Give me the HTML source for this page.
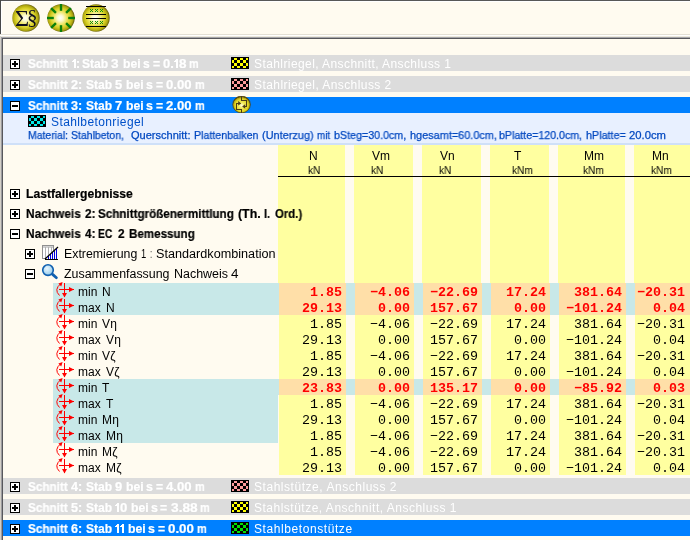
<!DOCTYPE html><html><head><meta charset="utf-8"><style>html,body{margin:0;padding:0}body{width:690px;height:540px;overflow:hidden;background:#fffbf0;position:relative;font-family:"Liberation Sans",sans-serif}div,span,svg{position:absolute;box-sizing:content-box}span{white-space:pre;will-change:transform}</style></head><body><div style="left:0px;top:0px;width:690px;height:1px;background:#585858;"></div><div style="left:0px;top:1px;width:690px;height:1px;background:#ffffff;"></div><div style="left:0px;top:0px;width:1px;height:34px;background:#484848;"></div><div style="left:1px;top:1px;width:1px;height:33px;background:#ffffff;"></div><div style="left:0px;top:34px;width:690px;height:1px;background:#e4e0d4;"></div><div style="left:0px;top:35px;width:690px;height:1px;background:#ffffff;"></div><div style="left:0px;top:36px;width:690px;height:1px;background:#ece8dc;"></div><div style="left:0px;top:36px;width:1px;height:504px;background:#d4d0c8;"></div><div style="left:1px;top:37px;width:689px;height:1px;background:#a4a4a8;"></div><div style="left:1px;top:37px;width:1px;height:503px;background:#9c9ca0;"></div><div style="left:2px;top:38px;width:688px;height:1px;background:#58585c;"></div><div style="left:2px;top:38px;width:1px;height:502px;background:#58585c;"></div><svg style="left:12px;top:4px" width="28" height="28" viewBox="0 0 28 28"><defs><radialGradient id="g26" cx="0.48" cy="0.5" r="0.52" fx="0.47" fy="0.5"><stop offset="0" stop-color="#ffffff"/><stop offset="0.2" stop-color="#fcfad0"/><stop offset="0.45" stop-color="#eee668"/><stop offset="0.7" stop-color="#d6ce22"/><stop offset="0.88" stop-color="#aca410"/><stop offset="1" stop-color="#5c5408"/></radialGradient></defs><circle cx="14" cy="14" r="13.7" fill="url(#g26)"/></svg><span style="top:2.43px;font-size:22.5px;line-height:33.75px;color:#101020;font-family:'Liberation Serif';left:15.40px;transform:scaleX(1.08);transform-origin:left center;">Σ</span><span style="top:1.56px;font-size:21px;line-height:31.5px;color:#101020;font-family:'Liberation Serif';left:26.70px;">§</span><svg style="left:47px;top:4px" width="28" height="28" viewBox="0 0 28 28"><defs><radialGradient id="g61" cx="0.48" cy="0.5" r="0.52" fx="0.47" fy="0.5"><stop offset="0" stop-color="#ffffff"/><stop offset="0.2" stop-color="#fcfad0"/><stop offset="0.45" stop-color="#eee668"/><stop offset="0.7" stop-color="#d6ce22"/><stop offset="0.88" stop-color="#aca410"/><stop offset="1" stop-color="#5c5408"/></radialGradient></defs><circle cx="14" cy="14" r="13.7" fill="url(#g61)"/><line x1="21.20" y1="14.00" x2="28.00" y2="14.00" stroke="#0c800c" stroke-width="2.4"/><line x1="19.09" y1="19.09" x2="23.90" y2="23.90" stroke="#0c800c" stroke-width="2.4"/><line x1="14.00" y1="21.20" x2="14.00" y2="28.00" stroke="#0c800c" stroke-width="2.4"/><line x1="8.91" y1="19.09" x2="4.10" y2="23.90" stroke="#0c800c" stroke-width="2.4"/><line x1="6.80" y1="14.00" x2="0.00" y2="14.00" stroke="#0c800c" stroke-width="2.4"/><line x1="8.91" y1="8.91" x2="4.10" y2="4.10" stroke="#0c800c" stroke-width="2.4"/><line x1="14.00" y1="6.80" x2="14.00" y2="0.00" stroke="#0c800c" stroke-width="2.4"/><line x1="19.09" y1="8.91" x2="23.90" y2="4.10" stroke="#0c800c" stroke-width="2.4"/></svg><svg style="left:82px;top:4px" width="28" height="28" viewBox="0 0 28 28"><defs><radialGradient id="g96" cx="0.48" cy="0.5" r="0.52" fx="0.47" fy="0.5"><stop offset="0" stop-color="#ffffff"/><stop offset="0.2" stop-color="#fcfad0"/><stop offset="0.45" stop-color="#eee668"/><stop offset="0.7" stop-color="#d6ce22"/><stop offset="0.88" stop-color="#aca410"/><stop offset="1" stop-color="#5c5408"/></radialGradient></defs><circle cx="14" cy="14" r="13.7" fill="url(#g96)"/><rect x="4" y="2" width="20" height="1" fill="#000" shape-rendering="crispEdges"/><rect x="4" y="10" width="20" height="1" fill="#000" shape-rendering="crispEdges"/><rect x="4" y="14" width="20" height="1" fill="#000" shape-rendering="crispEdges"/><rect x="4" y="22" width="20" height="1" fill="#000" shape-rendering="crispEdges"/><rect x="8" y="5" width="1" height="1" fill="#109010" shape-rendering="crispEdges"/><rect x="10" y="5" width="1" height="1" fill="#109010" shape-rendering="crispEdges"/><rect x="9" y="6" width="1" height="1" fill="#109010" shape-rendering="crispEdges"/><rect x="8" y="7" width="1" height="1" fill="#109010" shape-rendering="crispEdges"/><rect x="10" y="7" width="1" height="1" fill="#109010" shape-rendering="crispEdges"/><rect x="13" y="5" width="1" height="1" fill="#109010" shape-rendering="crispEdges"/><rect x="15" y="5" width="1" height="1" fill="#109010" shape-rendering="crispEdges"/><rect x="14" y="6" width="1" height="1" fill="#109010" shape-rendering="crispEdges"/><rect x="13" y="7" width="1" height="1" fill="#109010" shape-rendering="crispEdges"/><rect x="15" y="7" width="1" height="1" fill="#109010" shape-rendering="crispEdges"/><rect x="18" y="5" width="1" height="1" fill="#109010" shape-rendering="crispEdges"/><rect x="20" y="5" width="1" height="1" fill="#109010" shape-rendering="crispEdges"/><rect x="19" y="6" width="1" height="1" fill="#109010" shape-rendering="crispEdges"/><rect x="18" y="7" width="1" height="1" fill="#109010" shape-rendering="crispEdges"/><rect x="20" y="7" width="1" height="1" fill="#109010" shape-rendering="crispEdges"/><rect x="8" y="17" width="1" height="1" fill="#109010" shape-rendering="crispEdges"/><rect x="10" y="17" width="1" height="1" fill="#109010" shape-rendering="crispEdges"/><rect x="9" y="18" width="1" height="1" fill="#109010" shape-rendering="crispEdges"/><rect x="8" y="19" width="1" height="1" fill="#109010" shape-rendering="crispEdges"/><rect x="10" y="19" width="1" height="1" fill="#109010" shape-rendering="crispEdges"/><rect x="13" y="17" width="1" height="1" fill="#109010" shape-rendering="crispEdges"/><rect x="15" y="17" width="1" height="1" fill="#109010" shape-rendering="crispEdges"/><rect x="14" y="18" width="1" height="1" fill="#109010" shape-rendering="crispEdges"/><rect x="13" y="19" width="1" height="1" fill="#109010" shape-rendering="crispEdges"/><rect x="15" y="19" width="1" height="1" fill="#109010" shape-rendering="crispEdges"/><rect x="18" y="17" width="1" height="1" fill="#109010" shape-rendering="crispEdges"/><rect x="20" y="17" width="1" height="1" fill="#109010" shape-rendering="crispEdges"/><rect x="19" y="18" width="1" height="1" fill="#109010" shape-rendering="crispEdges"/><rect x="18" y="19" width="1" height="1" fill="#109010" shape-rendering="crispEdges"/><rect x="20" y="19" width="1" height="1" fill="#109010" shape-rendering="crispEdges"/></svg><div style="left:3px;top:55px;width:687px;height:16px;background:#dcdcdc;"></div><div style="left:10px;top:59px;width:8px;height:8px;border:1px solid #000;background:#fff"></div><div style="left:12px;top:63px;width:6px;height:2px;background:#000;"></div><div style="left:14px;top:61px;width:2px;height:6px;background:#000;"></div><span style="top:54.84px;font-size:12px;line-height:18.0px;color:#ffffff;font-weight:bold;-webkit-text-stroke:0.2px #ffffff;left:28.40px;transform:scaleX(0.976);transform-origin:left center;">Schnitt</span><span style="top:54.84px;font-size:12px;line-height:18.0px;color:#ffffff;font-weight:bold;-webkit-text-stroke:0.2px #ffffff;left:76.10px;transform:scaleX(0.9);transform-origin:left center;">:</span><span style="top:54.84px;font-size:12px;line-height:18.0px;color:#ffffff;font-weight:bold;-webkit-text-stroke:0.2px #ffffff;left:82.20px;transform:scaleX(1.007);transform-origin:left center;">Stab</span><span style="top:54.84px;font-size:12px;line-height:18.0px;color:#ffffff;font-weight:bold;-webkit-text-stroke:0.2px #ffffff;left:110.70px;transform:scaleX(1.136);transform-origin:left center;">3</span><span style="top:54.84px;font-size:12px;line-height:18.0px;color:#ffffff;font-weight:bold;-webkit-text-stroke:0.2px #ffffff;left:122.50px;transform:scaleX(1.009);transform-origin:left center;">bei</span><span style="top:54.84px;font-size:12px;line-height:18.0px;color:#ffffff;font-weight:bold;-webkit-text-stroke:0.2px #ffffff;left:142.70px;transform:scaleX(1.002);transform-origin:left center;">s</span><span style="top:54.84px;font-size:12px;line-height:18.0px;color:#ffffff;font-weight:bold;-webkit-text-stroke:0.2px #ffffff;left:152.50px;transform:scaleX(1.012);transform-origin:left center;">=</span><span style="top:54.84px;font-size:12px;line-height:18.0px;color:#ffffff;font-weight:bold;-webkit-text-stroke:0.2px #ffffff;left:162.50px;transform:scaleX(1.078);transform-origin:left center;">0.</span><span style="top:54.84px;font-size:12px;line-height:18.0px;color:#ffffff;font-weight:bold;-webkit-text-stroke:0.2px #ffffff;left:178.80px;transform:scaleX(1.121);transform-origin:left center;">8</span><span style="top:54.84px;font-size:12px;line-height:18.0px;color:#ffffff;font-weight:bold;-webkit-text-stroke:0.2px #ffffff;left:188.70px;transform:scaleX(0.909);transform-origin:left center;">m</span><svg style="left:231px;top:57px" width="18" height="12" shape-rendering="crispEdges"><rect width="18" height="12" fill="#000"/><rect x="3" y="1" width="3" height="2" fill="#ffff00"/><rect x="9" y="1" width="3" height="2" fill="#ffff00"/><rect x="15" y="1" width="2" height="2" fill="#ffff00"/><rect x="1" y="3" width="2" height="3" fill="#ffff00"/><rect x="6" y="3" width="3" height="3" fill="#ffff00"/><rect x="12" y="3" width="3" height="3" fill="#ffff00"/><rect x="3" y="6" width="3" height="3" fill="#ffff00"/><rect x="9" y="6" width="3" height="3" fill="#ffff00"/><rect x="15" y="6" width="2" height="3" fill="#ffff00"/><rect x="1" y="9" width="2" height="2" fill="#ffff00"/><rect x="6" y="9" width="3" height="2" fill="#ffff00"/><rect x="12" y="9" width="3" height="2" fill="#ffff00"/></svg><span style="top:54.84px;font-size:12px;line-height:18.0px;color:#ffffff;letter-spacing:0.415px;left:253.50px;">Stahlriegel, Anschnitt, Anschluss 1</span><div style="left:74px;top:59px;width:2px;height:9px;background:#fff;"></div><div style="left:73px;top:60px;width:1px;height:2px;background:#fff;"></div><div style="left:72px;top:61px;width:1px;height:1px;background:#fff;"></div><div style="left:176px;top:59px;width:2px;height:9px;background:#fff;"></div><div style="left:175px;top:60px;width:1px;height:2px;background:#fff;"></div><div style="left:174px;top:61px;width:1px;height:1px;background:#fff;"></div><div style="left:3px;top:76px;width:687px;height:16px;background:#dcdcdc;"></div><div style="left:10px;top:80px;width:8px;height:8px;border:1px solid #000;background:#fff"></div><div style="left:12px;top:84px;width:6px;height:2px;background:#000;"></div><div style="left:14px;top:82px;width:2px;height:6px;background:#000;"></div><span style="top:75.84px;font-size:12px;line-height:18.0px;color:#ffffff;font-weight:bold;-webkit-text-stroke:0.2px #ffffff;left:28.40px;transform:scaleX(0.976);transform-origin:left center;">Schnitt</span><span style="top:75.84px;font-size:12px;line-height:18.0px;color:#ffffff;font-weight:bold;-webkit-text-stroke:0.2px #ffffff;left:70.90px;transform:scaleX(1.049);transform-origin:left center;">2:</span><span style="top:75.84px;font-size:12px;line-height:18.0px;color:#ffffff;font-weight:bold;-webkit-text-stroke:0.2px #ffffff;left:85.70px;transform:scaleX(0.999);transform-origin:left center;">Stab</span><span style="top:75.84px;font-size:12px;line-height:18.0px;color:#ffffff;font-weight:bold;-webkit-text-stroke:0.2px #ffffff;left:114.70px;transform:scaleX(1.077);transform-origin:left center;">5</span><span style="top:75.84px;font-size:12px;line-height:18.0px;color:#ffffff;font-weight:bold;-webkit-text-stroke:0.2px #ffffff;left:125.70px;transform:scaleX(1.015);transform-origin:left center;">bei</span><span style="top:75.84px;font-size:12px;line-height:18.0px;color:#ffffff;font-weight:bold;-webkit-text-stroke:0.2px #ffffff;left:145.90px;transform:scaleX(1.032);transform-origin:left center;">s</span><span style="top:75.84px;font-size:12px;line-height:18.0px;color:#ffffff;font-weight:bold;-webkit-text-stroke:0.2px #ffffff;left:155.70px;transform:scaleX(1.012);transform-origin:left center;">=</span><span style="top:75.84px;font-size:12px;line-height:18.0px;color:#ffffff;font-weight:bold;-webkit-text-stroke:0.2px #ffffff;left:165.90px;transform:scaleX(1.096);transform-origin:left center;">0.00</span><span style="top:75.84px;font-size:12px;line-height:18.0px;color:#ffffff;font-weight:bold;-webkit-text-stroke:0.2px #ffffff;left:194.70px;transform:scaleX(0.918);transform-origin:left center;">m</span><svg style="left:231px;top:78px" width="18" height="12" shape-rendering="crispEdges"><rect width="18" height="12" fill="#000"/><rect x="3" y="1" width="3" height="2" fill="#ff9c9c"/><rect x="9" y="1" width="3" height="2" fill="#ff9c9c"/><rect x="15" y="1" width="2" height="2" fill="#ff9c9c"/><rect x="1" y="3" width="2" height="3" fill="#ff9c9c"/><rect x="6" y="3" width="3" height="3" fill="#ff9c9c"/><rect x="12" y="3" width="3" height="3" fill="#ff9c9c"/><rect x="3" y="6" width="3" height="3" fill="#ff9c9c"/><rect x="9" y="6" width="3" height="3" fill="#ff9c9c"/><rect x="15" y="6" width="2" height="3" fill="#ff9c9c"/><rect x="1" y="9" width="2" height="2" fill="#ff9c9c"/><rect x="6" y="9" width="3" height="2" fill="#ff9c9c"/><rect x="12" y="9" width="3" height="2" fill="#ff9c9c"/></svg><span style="top:75.84px;font-size:12px;line-height:18.0px;color:#ffffff;letter-spacing:0.425px;left:253.50px;">Stahlriegel, Anschluss 2</span><div style="left:3px;top:97px;width:687px;height:16px;background:#0080ff;"></div><div style="left:10px;top:101px;width:8px;height:8px;border:1px solid #000;background:#fff"></div><div style="left:12px;top:105px;width:6px;height:2px;background:#000;"></div><span style="top:96.84px;font-size:12px;line-height:18.0px;color:#ffffff;font-weight:bold;-webkit-text-stroke:0.2px #ffffff;left:28.40px;transform:scaleX(0.976);transform-origin:left center;">Schnitt</span><span style="top:96.84px;font-size:12px;line-height:18.0px;color:#ffffff;font-weight:bold;-webkit-text-stroke:0.2px #ffffff;left:70.90px;transform:scaleX(1.049);transform-origin:left center;">3:</span><span style="top:96.84px;font-size:12px;line-height:18.0px;color:#ffffff;font-weight:bold;-webkit-text-stroke:0.2px #ffffff;left:85.70px;transform:scaleX(0.999);transform-origin:left center;">Stab</span><span style="top:96.84px;font-size:12px;line-height:18.0px;color:#ffffff;font-weight:bold;-webkit-text-stroke:0.2px #ffffff;left:114.70px;transform:scaleX(1.077);transform-origin:left center;">7</span><span style="top:96.84px;font-size:12px;line-height:18.0px;color:#ffffff;font-weight:bold;-webkit-text-stroke:0.2px #ffffff;left:125.70px;transform:scaleX(1.015);transform-origin:left center;">bei</span><span style="top:96.84px;font-size:12px;line-height:18.0px;color:#ffffff;font-weight:bold;-webkit-text-stroke:0.2px #ffffff;left:145.90px;transform:scaleX(1.032);transform-origin:left center;">s</span><span style="top:96.84px;font-size:12px;line-height:18.0px;color:#ffffff;font-weight:bold;-webkit-text-stroke:0.2px #ffffff;left:155.70px;transform:scaleX(1.012);transform-origin:left center;">=</span><span style="top:96.84px;font-size:12px;line-height:18.0px;color:#ffffff;font-weight:bold;-webkit-text-stroke:0.2px #ffffff;left:165.90px;transform:scaleX(1.096);transform-origin:left center;">2.00</span><span style="top:96.84px;font-size:12px;line-height:18.0px;color:#ffffff;font-weight:bold;-webkit-text-stroke:0.2px #ffffff;left:194.70px;transform:scaleX(0.918);transform-origin:left center;">m</span><div style="left:3px;top:478px;width:687px;height:16px;background:#dcdcdc;"></div><div style="left:10px;top:482px;width:8px;height:8px;border:1px solid #000;background:#fff"></div><div style="left:12px;top:486px;width:6px;height:2px;background:#000;"></div><div style="left:14px;top:484px;width:2px;height:6px;background:#000;"></div><span style="top:477.84px;font-size:12px;line-height:18.0px;color:#ffffff;font-weight:bold;-webkit-text-stroke:0.2px #ffffff;left:28.40px;transform:scaleX(0.976);transform-origin:left center;">Schnitt</span><span style="top:477.84px;font-size:12px;line-height:18.0px;color:#ffffff;font-weight:bold;-webkit-text-stroke:0.2px #ffffff;left:70.90px;transform:scaleX(1.049);transform-origin:left center;">4:</span><span style="top:477.84px;font-size:12px;line-height:18.0px;color:#ffffff;font-weight:bold;-webkit-text-stroke:0.2px #ffffff;left:85.70px;transform:scaleX(0.999);transform-origin:left center;">Stab</span><span style="top:477.84px;font-size:12px;line-height:18.0px;color:#ffffff;font-weight:bold;-webkit-text-stroke:0.2px #ffffff;left:114.70px;transform:scaleX(1.077);transform-origin:left center;">9</span><span style="top:477.84px;font-size:12px;line-height:18.0px;color:#ffffff;font-weight:bold;-webkit-text-stroke:0.2px #ffffff;left:125.70px;transform:scaleX(1.015);transform-origin:left center;">bei</span><span style="top:477.84px;font-size:12px;line-height:18.0px;color:#ffffff;font-weight:bold;-webkit-text-stroke:0.2px #ffffff;left:145.90px;transform:scaleX(1.032);transform-origin:left center;">s</span><span style="top:477.84px;font-size:12px;line-height:18.0px;color:#ffffff;font-weight:bold;-webkit-text-stroke:0.2px #ffffff;left:155.70px;transform:scaleX(1.012);transform-origin:left center;">=</span><span style="top:477.84px;font-size:12px;line-height:18.0px;color:#ffffff;font-weight:bold;-webkit-text-stroke:0.2px #ffffff;left:165.90px;transform:scaleX(1.096);transform-origin:left center;">4.00</span><span style="top:477.84px;font-size:12px;line-height:18.0px;color:#ffffff;font-weight:bold;-webkit-text-stroke:0.2px #ffffff;left:194.70px;transform:scaleX(0.918);transform-origin:left center;">m</span><svg style="left:231px;top:480px" width="18" height="12" shape-rendering="crispEdges"><rect width="18" height="12" fill="#000"/><rect x="3" y="1" width="3" height="2" fill="#ff9c9c"/><rect x="9" y="1" width="3" height="2" fill="#ff9c9c"/><rect x="15" y="1" width="2" height="2" fill="#ff9c9c"/><rect x="1" y="3" width="2" height="3" fill="#ff9c9c"/><rect x="6" y="3" width="3" height="3" fill="#ff9c9c"/><rect x="12" y="3" width="3" height="3" fill="#ff9c9c"/><rect x="3" y="6" width="3" height="3" fill="#ff9c9c"/><rect x="9" y="6" width="3" height="3" fill="#ff9c9c"/><rect x="15" y="6" width="2" height="3" fill="#ff9c9c"/><rect x="1" y="9" width="2" height="2" fill="#ff9c9c"/><rect x="6" y="9" width="3" height="2" fill="#ff9c9c"/><rect x="12" y="9" width="3" height="2" fill="#ff9c9c"/></svg><span style="top:477.84px;font-size:12px;line-height:18.0px;color:#ffffff;letter-spacing:0.54px;left:253.50px;">Stahlstütze, Anschluss 2</span><div style="left:3px;top:499px;width:687px;height:16px;background:#dcdcdc;"></div><div style="left:10px;top:503px;width:8px;height:8px;border:1px solid #000;background:#fff"></div><div style="left:12px;top:507px;width:6px;height:2px;background:#000;"></div><div style="left:14px;top:505px;width:2px;height:6px;background:#000;"></div><span style="top:498.84px;font-size:12px;line-height:18.0px;color:#ffffff;font-weight:bold;-webkit-text-stroke:0.2px #ffffff;left:28.40px;transform:scaleX(0.976);transform-origin:left center;">Schnitt</span><span style="top:498.84px;font-size:12px;line-height:18.0px;color:#ffffff;font-weight:bold;-webkit-text-stroke:0.2px #ffffff;left:70.90px;transform:scaleX(1.049);transform-origin:left center;">5:</span><span style="top:498.84px;font-size:12px;line-height:18.0px;color:#ffffff;font-weight:bold;-webkit-text-stroke:0.2px #ffffff;left:85.70px;transform:scaleX(0.999);transform-origin:left center;">Stab</span><span style="top:498.84px;font-size:12px;line-height:18.0px;color:#ffffff;font-weight:bold;-webkit-text-stroke:0.2px #ffffff;left:120.10px;transform:scaleX(1.092);transform-origin:left center;">0</span><span style="top:498.84px;font-size:12px;line-height:18.0px;color:#ffffff;font-weight:bold;-webkit-text-stroke:0.2px #ffffff;left:130.70px;transform:scaleX(1.015);transform-origin:left center;">bei</span><span style="top:498.84px;font-size:12px;line-height:18.0px;color:#ffffff;font-weight:bold;-webkit-text-stroke:0.2px #ffffff;left:151.00px;transform:scaleX(1.032);transform-origin:left center;">s</span><span style="top:498.84px;font-size:12px;line-height:18.0px;color:#ffffff;font-weight:bold;-webkit-text-stroke:0.2px #ffffff;left:160.40px;transform:scaleX(1.012);transform-origin:left center;">=</span><span style="top:498.84px;font-size:12px;line-height:18.0px;color:#ffffff;font-weight:bold;-webkit-text-stroke:0.2px #ffffff;left:170.60px;transform:scaleX(1.143);transform-origin:left center;">3.88</span><span style="top:498.84px;font-size:12px;line-height:18.0px;color:#ffffff;font-weight:bold;-webkit-text-stroke:0.2px #ffffff;left:200.30px;transform:scaleX(0.918);transform-origin:left center;">m</span><svg style="left:231px;top:501px" width="18" height="12" shape-rendering="crispEdges"><rect width="18" height="12" fill="#000"/><rect x="3" y="1" width="3" height="2" fill="#ffff00"/><rect x="9" y="1" width="3" height="2" fill="#ffff00"/><rect x="15" y="1" width="2" height="2" fill="#ffff00"/><rect x="1" y="3" width="2" height="3" fill="#ffff00"/><rect x="6" y="3" width="3" height="3" fill="#ffff00"/><rect x="12" y="3" width="3" height="3" fill="#ffff00"/><rect x="3" y="6" width="3" height="3" fill="#ffff00"/><rect x="9" y="6" width="3" height="3" fill="#ffff00"/><rect x="15" y="6" width="2" height="3" fill="#ffff00"/><rect x="1" y="9" width="2" height="2" fill="#ffff00"/><rect x="6" y="9" width="3" height="2" fill="#ffff00"/><rect x="12" y="9" width="3" height="2" fill="#ffff00"/></svg><span style="top:498.84px;font-size:12px;line-height:18.0px;color:#ffffff;letter-spacing:0.5px;left:253.50px;">Stahlstütze, Anschnitt, Anschluss 1</span><div style="left:3px;top:520px;width:687px;height:16px;background:#0080ff;"></div><div style="left:10px;top:524px;width:8px;height:8px;border:1px solid #000;background:#fff"></div><div style="left:12px;top:528px;width:6px;height:2px;background:#000;"></div><div style="left:14px;top:526px;width:2px;height:6px;background:#000;"></div><span style="top:519.84px;font-size:12px;line-height:18.0px;color:#ffffff;font-weight:bold;-webkit-text-stroke:0.2px #ffffff;left:28.40px;transform:scaleX(0.976);transform-origin:left center;">Schnitt</span><span style="top:519.84px;font-size:12px;line-height:18.0px;color:#ffffff;font-weight:bold;-webkit-text-stroke:0.2px #ffffff;left:70.90px;transform:scaleX(1.049);transform-origin:left center;">6:</span><span style="top:519.84px;font-size:12px;line-height:18.0px;color:#ffffff;font-weight:bold;-webkit-text-stroke:0.2px #ffffff;left:85.70px;transform:scaleX(0.999);transform-origin:left center;">Stab</span><span style="top:519.84px;font-size:12px;line-height:18.0px;color:#ffffff;font-weight:bold;-webkit-text-stroke:0.2px #ffffff;left:127.80px;transform:scaleX(1.021);transform-origin:left center;">bei</span><span style="top:519.84px;font-size:12px;line-height:18.0px;color:#ffffff;font-weight:bold;-webkit-text-stroke:0.2px #ffffff;left:148.10px;transform:scaleX(1.032);transform-origin:left center;">s</span><span style="top:519.84px;font-size:12px;line-height:18.0px;color:#ffffff;font-weight:bold;-webkit-text-stroke:0.2px #ffffff;left:157.80px;transform:scaleX(1.012);transform-origin:left center;">=</span><span style="top:519.84px;font-size:12px;line-height:18.0px;color:#ffffff;font-weight:bold;-webkit-text-stroke:0.2px #ffffff;left:167.70px;transform:scaleX(1.109);transform-origin:left center;">0.00</span><span style="top:519.84px;font-size:12px;line-height:18.0px;color:#ffffff;font-weight:bold;-webkit-text-stroke:0.2px #ffffff;left:196.70px;transform:scaleX(0.918);transform-origin:left center;">m</span><svg style="left:231px;top:522px" width="18" height="12" shape-rendering="crispEdges"><rect width="18" height="12" fill="#000"/><rect x="3" y="1" width="3" height="2" fill="#00e000"/><rect x="9" y="1" width="3" height="2" fill="#00e000"/><rect x="15" y="1" width="2" height="2" fill="#00e000"/><rect x="1" y="3" width="2" height="3" fill="#00e000"/><rect x="6" y="3" width="3" height="3" fill="#00e000"/><rect x="12" y="3" width="3" height="3" fill="#00e000"/><rect x="3" y="6" width="3" height="3" fill="#00e000"/><rect x="9" y="6" width="3" height="3" fill="#00e000"/><rect x="15" y="6" width="2" height="3" fill="#00e000"/><rect x="1" y="9" width="2" height="2" fill="#00e000"/><rect x="6" y="9" width="3" height="2" fill="#00e000"/><rect x="12" y="9" width="3" height="2" fill="#00e000"/></svg><span style="top:519.84px;font-size:12px;line-height:18.0px;color:#ffffff;letter-spacing:0.58px;left:253.50px;">Stahlbetonstütze</span><div style="left:117px;top:503px;width:2px;height:9px;background:#fff;"></div><div style="left:116px;top:504px;width:1px;height:2px;background:#fff;"></div><div style="left:115px;top:505px;width:1px;height:1px;background:#fff;"></div><div style="left:117px;top:524px;width:2px;height:9px;background:#fff;"></div><div style="left:116px;top:525px;width:1px;height:2px;background:#fff;"></div><div style="left:115px;top:526px;width:1px;height:1px;background:#fff;"></div><div style="left:122px;top:524px;width:2px;height:9px;background:#fff;"></div><div style="left:121px;top:525px;width:1px;height:2px;background:#fff;"></div><div style="left:120px;top:526px;width:1px;height:1px;background:#fff;"></div><svg style="left:232px;top:96px" width="19" height="17" viewBox="0 0 19 17"><defs><radialGradient id="gs" cx="0.5" cy="0.55" r="0.5"><stop offset="0" stop-color="#fffce0"/><stop offset="0.3" stop-color="#f4ec60"/><stop offset="0.75" stop-color="#e0d420"/><stop offset="0.93" stop-color="#b0a010"/><stop offset="1" stop-color="#605008"/></radialGradient></defs><ellipse cx="9.55" cy="8.5" rx="8.8" ry="8.4" fill="url(#gs)" stroke="#504010" stroke-width="0.7"/><g fill="#4c3c18" shape-rendering="crispEdges"><rect x="9" y="0" width="1" height="5"/><rect x="9" y="4" width="6" height="1"/><rect x="14" y="4" width="1" height="7"/><rect x="12" y="10" width="3" height="1"/><rect x="9" y="13" width="1" height="4"/><rect x="4" y="13" width="6" height="1"/><rect x="4" y="7" width="1" height="7"/><rect x="4" y="7" width="3" height="1"/></g><path d="M6.2 5L6.2 9.6L9.2 7.4Z M13.2 8.2L13.2 12.8L10.2 10.5Z" fill="#4c3c18"/></svg><div style="left:3px;top:113px;width:687px;height:31px;background:#e8f0ff;"></div><div style="left:3px;top:143px;width:687px;height:2px;background:#cfe0f8;"></div><svg style="left:28px;top:115px" width="18" height="12" shape-rendering="crispEdges"><rect width="18" height="12" fill="#000"/><rect x="3" y="1" width="3" height="2" fill="#00e8e8"/><rect x="9" y="1" width="3" height="2" fill="#00e8e8"/><rect x="15" y="1" width="2" height="2" fill="#00e8e8"/><rect x="1" y="3" width="2" height="3" fill="#00e8e8"/><rect x="6" y="3" width="3" height="3" fill="#00e8e8"/><rect x="12" y="3" width="3" height="3" fill="#00e8e8"/><rect x="3" y="6" width="3" height="3" fill="#00e8e8"/><rect x="9" y="6" width="3" height="3" fill="#00e8e8"/><rect x="15" y="6" width="2" height="3" fill="#00e8e8"/><rect x="1" y="9" width="2" height="2" fill="#00e8e8"/><rect x="6" y="9" width="3" height="2" fill="#00e8e8"/><rect x="12" y="9" width="3" height="2" fill="#00e8e8"/></svg><span style="top:112.84px;font-size:12px;line-height:18.0px;color:#0050c8;letter-spacing:0.398px;left:51.00px;">Stahlbetonriegel</span><span style="top:126.94px;font-size:11px;line-height:16.5px;color:#0048c0;-webkit-text-stroke:0.25px #0048c0;left:27.70px;transform:scaleX(0.951);transform-origin:left center;">Material:</span><span style="top:126.94px;font-size:11px;line-height:16.5px;color:#0048c0;-webkit-text-stroke:0.25px #0048c0;left:71.00px;transform:scaleX(0.952);transform-origin:left center;">Stahlbeton,</span><span style="top:126.94px;font-size:11px;line-height:16.5px;color:#0048c0;-webkit-text-stroke:0.25px #0048c0;left:130.50px;transform:scaleX(1.003);transform-origin:left center;">Querschnitt:</span><span style="top:126.94px;font-size:11px;line-height:16.5px;color:#0048c0;-webkit-text-stroke:0.25px #0048c0;left:193.90px;transform:scaleX(0.966);transform-origin:left center;">Plattenbalken</span><span style="top:126.94px;font-size:11px;line-height:16.5px;color:#0048c0;-webkit-text-stroke:0.25px #0048c0;left:261.70px;transform:scaleX(0.993);transform-origin:left center;">(Unterzug)</span><span style="top:126.94px;font-size:11px;line-height:16.5px;color:#0048c0;-webkit-text-stroke:0.25px #0048c0;left:316.90px;transform:scaleX(0.893);transform-origin:left center;">mit</span><span style="top:126.94px;font-size:11px;line-height:16.5px;color:#0048c0;-webkit-text-stroke:0.25px #0048c0;left:333.90px;transform:scaleX(0.972);transform-origin:left center;">bSteg=30.0cm,</span><span style="top:126.94px;font-size:11px;line-height:16.5px;color:#0048c0;-webkit-text-stroke:0.25px #0048c0;left:410.00px;transform:scaleX(0.991);transform-origin:left center;">hgesamt=60.0cm,</span><span style="top:126.94px;font-size:11px;line-height:16.5px;color:#0048c0;-webkit-text-stroke:0.25px #0048c0;left:499.40px;transform:scaleX(0.967);transform-origin:left center;">bPlatte=120.0cm,</span><span style="top:126.94px;font-size:11px;line-height:16.5px;color:#0048c0;-webkit-text-stroke:0.25px #0048c0;left:585.50px;transform:scaleX(0.979);transform-origin:left center;">hPlatte=</span><span style="top:126.94px;font-size:11px;line-height:16.5px;color:#0048c0;-webkit-text-stroke:0.25px #0048c0;left:628.90px;transform:scaleX(1.023);transform-origin:left center;">20.0cm</span><div style="left:278px;top:145px;width:67px;height:138px;background:#ffffa0;"></div><div style="left:354px;top:145px;width:59px;height:138px;background:#ffffa0;"></div><div style="left:422px;top:145px;width:59px;height:138px;background:#ffffa0;"></div><div style="left:490px;top:145px;width:59px;height:138px;background:#ffffa0;"></div><div style="left:558px;top:145px;width:67px;height:138px;background:#ffffa0;"></div><div style="left:634px;top:145px;width:56px;height:138px;background:#ffffa0;"></div><div style="left:279px;top:283px;width:67px;height:192px;background:#ffffa0;"></div><div style="left:355px;top:283px;width:59px;height:192px;background:#ffffa0;"></div><div style="left:423px;top:283px;width:59px;height:192px;background:#ffffa0;"></div><div style="left:491px;top:283px;width:59px;height:192px;background:#ffffa0;"></div><div style="left:559px;top:283px;width:67px;height:192px;background:#ffffa0;"></div><div style="left:635px;top:283px;width:55px;height:192px;background:#ffffa0;"></div><div style="left:53px;top:283px;width:637px;height:32px;background:#c8e8e8;"></div><div style="left:279px;top:283px;width:67px;height:32px;background:#ffdfa8;"></div><div style="left:355px;top:283px;width:59px;height:32px;background:#ffdfa8;"></div><div style="left:423px;top:283px;width:59px;height:32px;background:#ffdfa8;"></div><div style="left:491px;top:283px;width:59px;height:32px;background:#ffdfa8;"></div><div style="left:559px;top:283px;width:67px;height:32px;background:#ffdfa8;"></div><div style="left:635px;top:283px;width:55px;height:32px;background:#ffdfa8;"></div><div style="left:53px;top:379px;width:637px;height:16px;background:#c8e8e8;"></div><div style="left:279px;top:379px;width:67px;height:16px;background:#ffdfa8;"></div><div style="left:355px;top:379px;width:59px;height:16px;background:#ffdfa8;"></div><div style="left:423px;top:379px;width:59px;height:16px;background:#ffdfa8;"></div><div style="left:491px;top:379px;width:59px;height:16px;background:#ffdfa8;"></div><div style="left:559px;top:379px;width:67px;height:16px;background:#ffdfa8;"></div><div style="left:635px;top:379px;width:55px;height:16px;background:#ffdfa8;"></div><div style="left:53px;top:395px;width:225px;height:48px;background:#c8e8e8;"></div><div style="left:278px;top:176px;width:412px;height:1px;background:#000;"></div><span style="top:146.84px;font-size:12px;line-height:18.0px;color:#000;left:309.20px;">N</span><span style="top:161.94px;font-size:11px;line-height:16.5px;color:#000;left:308.00px;transform:scaleX(0.92);transform-origin:left center;">kN</span><span style="top:146.84px;font-size:12px;line-height:18.0px;color:#000;left:372.40px;">Vm</span><span style="top:161.94px;font-size:11px;line-height:16.5px;color:#000;left:371.30px;transform:scaleX(0.92);transform-origin:left center;">kN</span><span style="top:146.84px;font-size:12px;line-height:18.0px;color:#000;left:440.40px;">Vn</span><span style="top:161.94px;font-size:11px;line-height:16.5px;color:#000;left:439.30px;transform:scaleX(0.92);transform-origin:left center;">kN</span><span style="top:146.84px;font-size:12px;line-height:18.0px;color:#000;left:514.00px;">T</span><span style="top:161.94px;font-size:11px;line-height:16.5px;color:#000;left:512.30px;transform:scaleX(0.92);transform-origin:left center;">kNm</span><span style="top:146.84px;font-size:12px;line-height:18.0px;color:#000;left:584.30px;">Mm</span><span style="top:161.94px;font-size:11px;line-height:16.5px;color:#000;left:582.80px;transform:scaleX(0.92);transform-origin:left center;">kNm</span><span style="top:146.84px;font-size:12px;line-height:18.0px;color:#000;left:652.30px;">Mn</span><span style="top:161.94px;font-size:11px;line-height:16.5px;color:#000;left:650.70px;transform:scaleX(0.92);transform-origin:left center;">kNm</span><div style="left:10px;top:189px;width:8px;height:8px;border:1px solid #000;background:#fff"></div><div style="left:12px;top:193px;width:6px;height:2px;background:#000;"></div><div style="left:14px;top:191px;width:2px;height:6px;background:#000;"></div><span style="top:184.84px;font-size:12px;line-height:18.0px;color:#000;font-weight:bold;-webkit-text-stroke:0.2px #000;left:26.40px;transform:scaleX(1.014);transform-origin:left center;">Lastfallergebnisse</span><div style="left:10px;top:209px;width:8px;height:8px;border:1px solid #000;background:#fff"></div><div style="left:12px;top:213px;width:6px;height:2px;background:#000;"></div><div style="left:14px;top:211px;width:2px;height:6px;background:#000;"></div><span style="top:204.84px;font-size:12px;line-height:18.0px;color:#000;font-weight:bold;-webkit-text-stroke:0.2px #000;left:26.40px;transform:scaleX(0.99);transform-origin:left center;">Nachweis</span><span style="top:204.84px;font-size:12px;line-height:18.0px;color:#000;font-weight:bold;-webkit-text-stroke:0.2px #000;left:84.90px;transform:scaleX(0.975);transform-origin:left center;">2:</span><span style="top:204.84px;font-size:12px;line-height:18.0px;color:#000;font-weight:bold;-webkit-text-stroke:0.2px #000;left:98.40px;transform:scaleX(0.97);transform-origin:left center;">Schnittgrößenermittlung</span><span style="top:204.84px;font-size:12px;line-height:18.0px;color:#000;font-weight:bold;-webkit-text-stroke:0.2px #000;left:238.00px;transform:scaleX(1.032);transform-origin:left center;">(Th.</span><span style="top:204.84px;font-size:12px;line-height:18.0px;color:#000;font-weight:bold;-webkit-text-stroke:0.2px #000;left:264.00px;transform:scaleX(0.914);transform-origin:left center;">I.</span><span style="top:204.84px;font-size:12px;line-height:18.0px;color:#000;font-weight:bold;-webkit-text-stroke:0.2px #000;left:274.50px;transform:scaleX(0.945);transform-origin:left center;">Ord.)</span><div style="left:10px;top:229px;width:8px;height:8px;border:1px solid #000;background:#fff"></div><div style="left:12px;top:233px;width:6px;height:2px;background:#000;"></div><span style="top:224.84px;font-size:12px;line-height:18.0px;color:#000;font-weight:bold;-webkit-text-stroke:0.2px #000;left:26.40px;transform:scaleX(0.99);transform-origin:left center;">Nachweis</span><span style="top:224.84px;font-size:12px;line-height:18.0px;color:#000;font-weight:bold;-webkit-text-stroke:0.2px #000;left:84.90px;transform:scaleX(0.975);transform-origin:left center;">4:</span><span style="top:224.84px;font-size:12px;line-height:18.0px;color:#000;font-weight:bold;-webkit-text-stroke:0.2px #000;left:98.40px;transform:scaleX(0.858);transform-origin:left center;">EC</span><span style="top:224.84px;font-size:12px;line-height:18.0px;color:#000;font-weight:bold;-webkit-text-stroke:0.2px #000;left:118.00px;transform:scaleX(0.987);transform-origin:left center;">2</span><span style="top:224.84px;font-size:12px;line-height:18.0px;color:#000;font-weight:bold;-webkit-text-stroke:0.2px #000;left:128.80px;transform:scaleX(0.967);transform-origin:left center;">Bemessung</span><div style="left:25px;top:249px;width:8px;height:8px;border:1px solid #000;background:#fff"></div><div style="left:27px;top:253px;width:6px;height:2px;background:#000;"></div><div style="left:29px;top:251px;width:2px;height:6px;background:#000;"></div><span style="top:244.84px;font-size:12px;line-height:18.0px;color:#000;left:63.50px;transform:scaleX(1.027);transform-origin:left center;">Extremierung</span><span style="top:244.84px;font-size:12px;line-height:18.0px;color:#000;left:140.90px;transform:scaleX(0.778);transform-origin:left center;">1</span><span style="top:244.84px;font-size:12px;line-height:18.0px;color:#000;left:149.50px;transform:scaleX(0.658);transform-origin:left center;">:</span><span style="top:244.84px;font-size:12px;line-height:18.0px;color:#000;left:155.70px;transform:scaleX(1.054);transform-origin:left center;">Standardkombination</span><div style="left:25px;top:269px;width:8px;height:8px;border:1px solid #000;background:#fff"></div><div style="left:27px;top:273px;width:6px;height:2px;background:#000;"></div><span style="top:264.84px;font-size:12px;line-height:18.0px;color:#000;left:63.50px;transform:scaleX(1.034);transform-origin:left center;">Zusammenfassung</span><span style="top:264.84px;font-size:12px;line-height:18.0px;color:#000;left:173.70px;transform:scaleX(1.038);transform-origin:left center;">Nachweis</span><span style="top:264.84px;font-size:12px;line-height:18.0px;color:#000;left:231.30px;transform:scaleX(1.121);transform-origin:left center;">4</span><svg style="left:42px;top:245px" width="17" height="15" viewBox="0 0 17 15" shape-rendering="crispEdges"><rect x="0.5" y="0.5" width="11" height="13" fill="#fff" stroke="#909090"/><rect x="1" y="1" width="10" height="2" fill="#d0d0d0"/><rect x="3" y="2" width="1" height="11" fill="#b0b0b0"/><rect x="6" y="2" width="1" height="11" fill="#b0b0b0"/><rect x="9" y="2" width="1" height="11" fill="#b0b0b0"/><path d="M3 14.5L16 2.5V14.5Z" fill="#fffbf0" shape-rendering="auto"/><rect x="6" y="11" width="1" height="3" fill="#0000e0"/><rect x="8" y="9" width="1" height="5" fill="#0000e0"/><rect x="10" y="7" width="1" height="7" fill="#0000e0"/><rect x="12" y="5" width="1" height="9" fill="#0000e0"/><rect x="14" y="3" width="1" height="11" fill="#0000e0"/><path d="M3 14L16 2" stroke="#000" stroke-width="1.2" fill="none" shape-rendering="auto"/><rect x="3" y="14" width="13" height="1" fill="#000"/></svg><svg style="left:41px;top:264px" width="18" height="17" viewBox="0 0 18 17"><defs><radialGradient id="gm" cx="0.4" cy="0.35" r="0.7"><stop offset="0" stop-color="#e8f6ff"/><stop offset="1" stop-color="#90c8e8"/></radialGradient></defs><line x1="11.6" y1="10.4" x2="15.4" y2="13.7" stroke="#1060b0" stroke-width="2.8" stroke-linecap="round"/><circle cx="7" cy="6.1" r="5.3" fill="url(#gm)" stroke="#1060b0" stroke-width="1.6"/></svg><svg style="left:55px;top:282px" width="20" height="16" viewBox="0 0 20 16"><g fill="#ff0000" shape-rendering="crispEdges"><rect x="9" y="1" width="1" height="14"/><rect x="4" y="7" width="15" height="1"/></g><path d="M14 5L19 7.5L14 10Z M7 11L12 11L9.5 15.5Z" fill="#ff0000"/><path d="M6 1.5Q-1.6 7.5 4.5 13.5" fill="none" stroke="#ff0000" stroke-width="1"/><path d="M7.6 0L3.4 1.4L6.2 4.4Z" fill="#ff0000"/></svg><span style="top:283.14px;font-size:12px;line-height:18.0px;color:#000;left:78.00px;">min</span><span style="top:283.14px;font-size:12px;line-height:18.0px;color:#000;letter-spacing:0.3px;left:101.90px;">N</span><span style="top:282.95px;font-size:13.33px;line-height:19.995px;color:#ff0000;font-family:'Liberation Mono';font-weight:bold;right:348.50px;">1.85</span><span style="top:282.95px;font-size:13.33px;line-height:19.995px;color:#ff0000;font-family:'Liberation Mono';font-weight:bold;right:280.50px;">−4.06</span><span style="top:282.95px;font-size:13.33px;line-height:19.995px;color:#ff0000;font-family:'Liberation Mono';font-weight:bold;right:212.50px;">−22.69</span><span style="top:282.95px;font-size:13.33px;line-height:19.995px;color:#ff0000;font-family:'Liberation Mono';font-weight:bold;right:144.50px;">17.24</span><span style="top:282.95px;font-size:13.33px;line-height:19.995px;color:#ff0000;font-family:'Liberation Mono';font-weight:bold;right:68.50px;">381.64</span><span style="top:282.95px;font-size:13.33px;line-height:19.995px;color:#ff0000;font-family:'Liberation Mono';font-weight:bold;right:5.00px;">−20.31</span><svg style="left:55px;top:298px" width="20" height="16" viewBox="0 0 20 16"><g fill="#ff0000" shape-rendering="crispEdges"><rect x="9" y="1" width="1" height="14"/><rect x="4" y="7" width="15" height="1"/></g><path d="M14 5L19 7.5L14 10Z M7 11L12 11L9.5 15.5Z" fill="#ff0000"/><path d="M6 1.5Q-1.6 7.5 4.5 13.5" fill="none" stroke="#ff0000" stroke-width="1"/><path d="M7.6 0L3.4 1.4L6.2 4.4Z" fill="#ff0000"/></svg><span style="top:299.14px;font-size:12px;line-height:18.0px;color:#000;left:78.00px;">max</span><span style="top:299.14px;font-size:12px;line-height:18.0px;color:#000;letter-spacing:0.3px;left:105.50px;">N</span><span style="top:298.95px;font-size:13.33px;line-height:19.995px;color:#ff0000;font-family:'Liberation Mono';font-weight:bold;right:348.50px;">29.13</span><span style="top:298.95px;font-size:13.33px;line-height:19.995px;color:#ff0000;font-family:'Liberation Mono';font-weight:bold;right:280.50px;">0.00</span><span style="top:298.95px;font-size:13.33px;line-height:19.995px;color:#ff0000;font-family:'Liberation Mono';font-weight:bold;right:212.50px;">157.67</span><span style="top:298.95px;font-size:13.33px;line-height:19.995px;color:#ff0000;font-family:'Liberation Mono';font-weight:bold;right:144.50px;">0.00</span><span style="top:298.95px;font-size:13.33px;line-height:19.995px;color:#ff0000;font-family:'Liberation Mono';font-weight:bold;right:68.50px;">−101.24</span><span style="top:298.95px;font-size:13.33px;line-height:19.995px;color:#ff0000;font-family:'Liberation Mono';font-weight:bold;right:5.00px;">0.04</span><svg style="left:55px;top:314px" width="20" height="16" viewBox="0 0 20 16"><g fill="#ff0000" shape-rendering="crispEdges"><rect x="9" y="1" width="1" height="14"/><rect x="4" y="7" width="15" height="1"/></g><path d="M14 5L19 7.5L14 10Z M7 11L12 11L9.5 15.5Z" fill="#ff0000"/><path d="M6 1.5Q-1.6 7.5 4.5 13.5" fill="none" stroke="#ff0000" stroke-width="1"/><path d="M7.6 0L3.4 1.4L6.2 4.4Z" fill="#ff0000"/></svg><span style="top:315.14px;font-size:12px;line-height:18.0px;color:#000;left:78.00px;">min</span><span style="top:315.14px;font-size:12px;line-height:18.0px;color:#000;letter-spacing:0.3px;left:101.90px;">Vη</span><span style="top:314.95px;font-size:13.33px;line-height:19.995px;color:#000;font-family:'Liberation Mono';right:348.50px;">1.85</span><span style="top:314.95px;font-size:13.33px;line-height:19.995px;color:#000;font-family:'Liberation Mono';right:280.50px;">−4.06</span><span style="top:314.95px;font-size:13.33px;line-height:19.995px;color:#000;font-family:'Liberation Mono';right:212.50px;">−22.69</span><span style="top:314.95px;font-size:13.33px;line-height:19.995px;color:#000;font-family:'Liberation Mono';right:144.50px;">17.24</span><span style="top:314.95px;font-size:13.33px;line-height:19.995px;color:#000;font-family:'Liberation Mono';right:68.50px;">381.64</span><span style="top:314.95px;font-size:13.33px;line-height:19.995px;color:#000;font-family:'Liberation Mono';right:5.00px;">−20.31</span><svg style="left:55px;top:330px" width="20" height="16" viewBox="0 0 20 16"><g fill="#ff0000" shape-rendering="crispEdges"><rect x="9" y="1" width="1" height="14"/><rect x="4" y="7" width="15" height="1"/></g><path d="M14 5L19 7.5L14 10Z M7 11L12 11L9.5 15.5Z" fill="#ff0000"/><path d="M6 1.5Q-1.6 7.5 4.5 13.5" fill="none" stroke="#ff0000" stroke-width="1"/><path d="M7.6 0L3.4 1.4L6.2 4.4Z" fill="#ff0000"/></svg><span style="top:331.14px;font-size:12px;line-height:18.0px;color:#000;left:78.00px;">max</span><span style="top:331.14px;font-size:12px;line-height:18.0px;color:#000;letter-spacing:0.3px;left:105.50px;">Vη</span><span style="top:330.95px;font-size:13.33px;line-height:19.995px;color:#000;font-family:'Liberation Mono';right:348.50px;">29.13</span><span style="top:330.95px;font-size:13.33px;line-height:19.995px;color:#000;font-family:'Liberation Mono';right:280.50px;">0.00</span><span style="top:330.95px;font-size:13.33px;line-height:19.995px;color:#000;font-family:'Liberation Mono';right:212.50px;">157.67</span><span style="top:330.95px;font-size:13.33px;line-height:19.995px;color:#000;font-family:'Liberation Mono';right:144.50px;">0.00</span><span style="top:330.95px;font-size:13.33px;line-height:19.995px;color:#000;font-family:'Liberation Mono';right:68.50px;">−101.24</span><span style="top:330.95px;font-size:13.33px;line-height:19.995px;color:#000;font-family:'Liberation Mono';right:5.00px;">0.04</span><svg style="left:55px;top:346px" width="20" height="16" viewBox="0 0 20 16"><g fill="#ff0000" shape-rendering="crispEdges"><rect x="9" y="1" width="1" height="14"/><rect x="4" y="7" width="15" height="1"/></g><path d="M14 5L19 7.5L14 10Z M7 11L12 11L9.5 15.5Z" fill="#ff0000"/><path d="M6 1.5Q-1.6 7.5 4.5 13.5" fill="none" stroke="#ff0000" stroke-width="1"/><path d="M7.6 0L3.4 1.4L6.2 4.4Z" fill="#ff0000"/></svg><span style="top:347.14px;font-size:12px;line-height:18.0px;color:#000;left:78.00px;">min</span><span style="top:347.14px;font-size:12px;line-height:18.0px;color:#000;letter-spacing:0.3px;left:101.90px;">Vζ</span><span style="top:346.95px;font-size:13.33px;line-height:19.995px;color:#000;font-family:'Liberation Mono';right:348.50px;">1.85</span><span style="top:346.95px;font-size:13.33px;line-height:19.995px;color:#000;font-family:'Liberation Mono';right:280.50px;">−4.06</span><span style="top:346.95px;font-size:13.33px;line-height:19.995px;color:#000;font-family:'Liberation Mono';right:212.50px;">−22.69</span><span style="top:346.95px;font-size:13.33px;line-height:19.995px;color:#000;font-family:'Liberation Mono';right:144.50px;">17.24</span><span style="top:346.95px;font-size:13.33px;line-height:19.995px;color:#000;font-family:'Liberation Mono';right:68.50px;">381.64</span><span style="top:346.95px;font-size:13.33px;line-height:19.995px;color:#000;font-family:'Liberation Mono';right:5.00px;">−20.31</span><svg style="left:55px;top:362px" width="20" height="16" viewBox="0 0 20 16"><g fill="#ff0000" shape-rendering="crispEdges"><rect x="9" y="1" width="1" height="14"/><rect x="4" y="7" width="15" height="1"/></g><path d="M14 5L19 7.5L14 10Z M7 11L12 11L9.5 15.5Z" fill="#ff0000"/><path d="M6 1.5Q-1.6 7.5 4.5 13.5" fill="none" stroke="#ff0000" stroke-width="1"/><path d="M7.6 0L3.4 1.4L6.2 4.4Z" fill="#ff0000"/></svg><span style="top:363.14px;font-size:12px;line-height:18.0px;color:#000;left:78.00px;">max</span><span style="top:363.14px;font-size:12px;line-height:18.0px;color:#000;letter-spacing:0.3px;left:105.50px;">Vζ</span><span style="top:362.95px;font-size:13.33px;line-height:19.995px;color:#000;font-family:'Liberation Mono';right:348.50px;">29.13</span><span style="top:362.95px;font-size:13.33px;line-height:19.995px;color:#000;font-family:'Liberation Mono';right:280.50px;">0.00</span><span style="top:362.95px;font-size:13.33px;line-height:19.995px;color:#000;font-family:'Liberation Mono';right:212.50px;">157.67</span><span style="top:362.95px;font-size:13.33px;line-height:19.995px;color:#000;font-family:'Liberation Mono';right:144.50px;">0.00</span><span style="top:362.95px;font-size:13.33px;line-height:19.995px;color:#000;font-family:'Liberation Mono';right:68.50px;">−101.24</span><span style="top:362.95px;font-size:13.33px;line-height:19.995px;color:#000;font-family:'Liberation Mono';right:5.00px;">0.04</span><svg style="left:55px;top:378px" width="20" height="16" viewBox="0 0 20 16"><g fill="#ff0000" shape-rendering="crispEdges"><rect x="9" y="1" width="1" height="14"/><rect x="4" y="7" width="15" height="1"/></g><path d="M14 5L19 7.5L14 10Z M7 11L12 11L9.5 15.5Z" fill="#ff0000"/><path d="M6 1.5Q-1.6 7.5 4.5 13.5" fill="none" stroke="#ff0000" stroke-width="1"/><path d="M7.6 0L3.4 1.4L6.2 4.4Z" fill="#ff0000"/></svg><span style="top:379.14px;font-size:12px;line-height:18.0px;color:#000;left:78.00px;">min</span><span style="top:379.14px;font-size:12px;line-height:18.0px;color:#000;letter-spacing:0.3px;left:101.90px;">T</span><span style="top:378.95px;font-size:13.33px;line-height:19.995px;color:#ff0000;font-family:'Liberation Mono';font-weight:bold;right:348.50px;">23.83</span><span style="top:378.95px;font-size:13.33px;line-height:19.995px;color:#ff0000;font-family:'Liberation Mono';font-weight:bold;right:280.50px;">0.00</span><span style="top:378.95px;font-size:13.33px;line-height:19.995px;color:#ff0000;font-family:'Liberation Mono';font-weight:bold;right:212.50px;">135.17</span><span style="top:378.95px;font-size:13.33px;line-height:19.995px;color:#ff0000;font-family:'Liberation Mono';font-weight:bold;right:144.50px;">0.00</span><span style="top:378.95px;font-size:13.33px;line-height:19.995px;color:#ff0000;font-family:'Liberation Mono';font-weight:bold;right:68.50px;">−85.92</span><span style="top:378.95px;font-size:13.33px;line-height:19.995px;color:#ff0000;font-family:'Liberation Mono';font-weight:bold;right:5.00px;">0.03</span><svg style="left:55px;top:394px" width="20" height="16" viewBox="0 0 20 16"><g fill="#ff0000" shape-rendering="crispEdges"><rect x="9" y="1" width="1" height="14"/><rect x="4" y="7" width="15" height="1"/></g><path d="M14 5L19 7.5L14 10Z M7 11L12 11L9.5 15.5Z" fill="#ff0000"/><path d="M6 1.5Q-1.6 7.5 4.5 13.5" fill="none" stroke="#ff0000" stroke-width="1"/><path d="M7.6 0L3.4 1.4L6.2 4.4Z" fill="#ff0000"/></svg><span style="top:395.14px;font-size:12px;line-height:18.0px;color:#000;left:78.00px;">max</span><span style="top:395.14px;font-size:12px;line-height:18.0px;color:#000;letter-spacing:0.3px;left:105.50px;">T</span><span style="top:394.95px;font-size:13.33px;line-height:19.995px;color:#000;font-family:'Liberation Mono';right:348.50px;">1.85</span><span style="top:394.95px;font-size:13.33px;line-height:19.995px;color:#000;font-family:'Liberation Mono';right:280.50px;">−4.06</span><span style="top:394.95px;font-size:13.33px;line-height:19.995px;color:#000;font-family:'Liberation Mono';right:212.50px;">−22.69</span><span style="top:394.95px;font-size:13.33px;line-height:19.995px;color:#000;font-family:'Liberation Mono';right:144.50px;">17.24</span><span style="top:394.95px;font-size:13.33px;line-height:19.995px;color:#000;font-family:'Liberation Mono';right:68.50px;">381.64</span><span style="top:394.95px;font-size:13.33px;line-height:19.995px;color:#000;font-family:'Liberation Mono';right:5.00px;">−20.31</span><svg style="left:55px;top:410px" width="20" height="16" viewBox="0 0 20 16"><g fill="#ff0000" shape-rendering="crispEdges"><rect x="9" y="1" width="1" height="14"/><rect x="4" y="7" width="15" height="1"/></g><path d="M14 5L19 7.5L14 10Z M7 11L12 11L9.5 15.5Z" fill="#ff0000"/><path d="M6 1.5Q-1.6 7.5 4.5 13.5" fill="none" stroke="#ff0000" stroke-width="1"/><path d="M7.6 0L3.4 1.4L6.2 4.4Z" fill="#ff0000"/></svg><span style="top:411.14px;font-size:12px;line-height:18.0px;color:#000;left:78.00px;">min</span><span style="top:411.14px;font-size:12px;line-height:18.0px;color:#000;letter-spacing:0.3px;left:101.90px;">Mη</span><span style="top:410.95px;font-size:13.33px;line-height:19.995px;color:#000;font-family:'Liberation Mono';right:348.50px;">29.13</span><span style="top:410.95px;font-size:13.33px;line-height:19.995px;color:#000;font-family:'Liberation Mono';right:280.50px;">0.00</span><span style="top:410.95px;font-size:13.33px;line-height:19.995px;color:#000;font-family:'Liberation Mono';right:212.50px;">157.67</span><span style="top:410.95px;font-size:13.33px;line-height:19.995px;color:#000;font-family:'Liberation Mono';right:144.50px;">0.00</span><span style="top:410.95px;font-size:13.33px;line-height:19.995px;color:#000;font-family:'Liberation Mono';right:68.50px;">−101.24</span><span style="top:410.95px;font-size:13.33px;line-height:19.995px;color:#000;font-family:'Liberation Mono';right:5.00px;">0.04</span><svg style="left:55px;top:426px" width="20" height="16" viewBox="0 0 20 16"><g fill="#ff0000" shape-rendering="crispEdges"><rect x="9" y="1" width="1" height="14"/><rect x="4" y="7" width="15" height="1"/></g><path d="M14 5L19 7.5L14 10Z M7 11L12 11L9.5 15.5Z" fill="#ff0000"/><path d="M6 1.5Q-1.6 7.5 4.5 13.5" fill="none" stroke="#ff0000" stroke-width="1"/><path d="M7.6 0L3.4 1.4L6.2 4.4Z" fill="#ff0000"/></svg><span style="top:427.14px;font-size:12px;line-height:18.0px;color:#000;left:78.00px;">max</span><span style="top:427.14px;font-size:12px;line-height:18.0px;color:#000;letter-spacing:0.3px;left:105.50px;">Mη</span><span style="top:426.95px;font-size:13.33px;line-height:19.995px;color:#000;font-family:'Liberation Mono';right:348.50px;">1.85</span><span style="top:426.95px;font-size:13.33px;line-height:19.995px;color:#000;font-family:'Liberation Mono';right:280.50px;">−4.06</span><span style="top:426.95px;font-size:13.33px;line-height:19.995px;color:#000;font-family:'Liberation Mono';right:212.50px;">−22.69</span><span style="top:426.95px;font-size:13.33px;line-height:19.995px;color:#000;font-family:'Liberation Mono';right:144.50px;">17.24</span><span style="top:426.95px;font-size:13.33px;line-height:19.995px;color:#000;font-family:'Liberation Mono';right:68.50px;">381.64</span><span style="top:426.95px;font-size:13.33px;line-height:19.995px;color:#000;font-family:'Liberation Mono';right:5.00px;">−20.31</span><svg style="left:55px;top:442px" width="20" height="16" viewBox="0 0 20 16"><g fill="#ff0000" shape-rendering="crispEdges"><rect x="9" y="1" width="1" height="14"/><rect x="4" y="7" width="15" height="1"/></g><path d="M14 5L19 7.5L14 10Z M7 11L12 11L9.5 15.5Z" fill="#ff0000"/><path d="M6 1.5Q-1.6 7.5 4.5 13.5" fill="none" stroke="#ff0000" stroke-width="1"/><path d="M7.6 0L3.4 1.4L6.2 4.4Z" fill="#ff0000"/></svg><span style="top:443.14px;font-size:12px;line-height:18.0px;color:#000;left:78.00px;">min</span><span style="top:443.14px;font-size:12px;line-height:18.0px;color:#000;letter-spacing:0.3px;left:101.90px;">Mζ</span><span style="top:442.95px;font-size:13.33px;line-height:19.995px;color:#000;font-family:'Liberation Mono';right:348.50px;">1.85</span><span style="top:442.95px;font-size:13.33px;line-height:19.995px;color:#000;font-family:'Liberation Mono';right:280.50px;">−4.06</span><span style="top:442.95px;font-size:13.33px;line-height:19.995px;color:#000;font-family:'Liberation Mono';right:212.50px;">−22.69</span><span style="top:442.95px;font-size:13.33px;line-height:19.995px;color:#000;font-family:'Liberation Mono';right:144.50px;">17.24</span><span style="top:442.95px;font-size:13.33px;line-height:19.995px;color:#000;font-family:'Liberation Mono';right:68.50px;">381.64</span><span style="top:442.95px;font-size:13.33px;line-height:19.995px;color:#000;font-family:'Liberation Mono';right:5.00px;">−20.31</span><svg style="left:55px;top:458px" width="20" height="16" viewBox="0 0 20 16"><g fill="#ff0000" shape-rendering="crispEdges"><rect x="9" y="1" width="1" height="14"/><rect x="4" y="7" width="15" height="1"/></g><path d="M14 5L19 7.5L14 10Z M7 11L12 11L9.5 15.5Z" fill="#ff0000"/><path d="M6 1.5Q-1.6 7.5 4.5 13.5" fill="none" stroke="#ff0000" stroke-width="1"/><path d="M7.6 0L3.4 1.4L6.2 4.4Z" fill="#ff0000"/></svg><span style="top:459.14px;font-size:12px;line-height:18.0px;color:#000;left:78.00px;">max</span><span style="top:459.14px;font-size:12px;line-height:18.0px;color:#000;letter-spacing:0.3px;left:105.50px;">Mζ</span><span style="top:458.95px;font-size:13.33px;line-height:19.995px;color:#000;font-family:'Liberation Mono';right:348.50px;">29.13</span><span style="top:458.95px;font-size:13.33px;line-height:19.995px;color:#000;font-family:'Liberation Mono';right:280.50px;">0.00</span><span style="top:458.95px;font-size:13.33px;line-height:19.995px;color:#000;font-family:'Liberation Mono';right:212.50px;">157.67</span><span style="top:458.95px;font-size:13.33px;line-height:19.995px;color:#000;font-family:'Liberation Mono';right:144.50px;">0.00</span><span style="top:458.95px;font-size:13.33px;line-height:19.995px;color:#000;font-family:'Liberation Mono';right:68.50px;">−101.24</span><span style="top:458.95px;font-size:13.33px;line-height:19.995px;color:#000;font-family:'Liberation Mono';right:5.00px;">0.04</span></body></html>
